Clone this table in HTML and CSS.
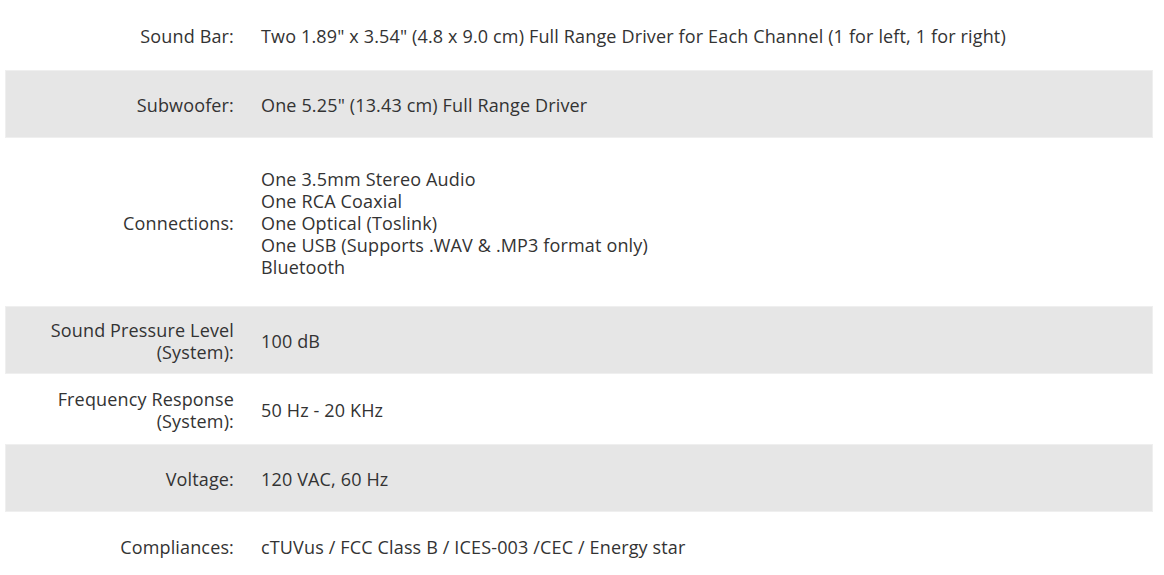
FILE: index.html
```html
<!DOCTYPE html>
<html>
<head>
<meta charset="utf-8">
<link rel="stylesheet" href="styles.css">
</head>
<body>
<table class="specs">
  <tr class="row h70">
    <th class="label">Sound Bar:</th>
    <td class="value">Two 1.89" x 3.54" (4.8 x 9.0 cm) Full Range Driver for Each Channel (1 for left, 1 for right)</td>
  </tr>
  <tr class="row alt">
    <th class="label">Subwoofer:</th>
    <td class="value">One 5.25" (13.43 cm) Full Range Driver</td>
  </tr>
  <tr class="row tall">
    <th class="label">Connections:</th>
    <td class="value">One 3.5mm Stereo Audio<br>One RCA Coaxial<br>One Optical (Toslink)<br>One USB (Supports .WAV &amp; .MP3 format only)<br>Bluetooth</td>
  </tr>
  <tr class="row alt">
    <th class="label">Sound Pressure Level (System):</th>
    <td class="value">100 dB</td>
  </tr>
  <tr class="row h70">
    <th class="label">Frequency Response (System):</th>
    <td class="value">50 Hz - 20 KHz</td>
  </tr>
  <tr class="row alt">
    <th class="label">Voltage:</th>
    <td class="value">120 VAC, 60 Hz</td>
  </tr>
  <tr class="row">
    <th class="label">Compliances:</th>
    <td class="value">cTUVus / FCC Class B / ICES-003 /CEC / Energy star</td>
  </tr>
</table>
</body>
</html>
```

FILE: styles.css
```css
html, body {
  margin: 0;
  padding: 0;
  background: #ffffff;
}
body {
  font-family: "Open Sans", "Liberation Sans", sans-serif;
  font-size: 18px;
  letter-spacing: 0.15px;
  line-height: 22px;
  color: #333333;
}
.specs {
  margin-left: 5px;
  width: 1148px;
  border-collapse: collapse;
  border-spacing: 0;
}
.row {
  height: 68px;
}
.row.h70 {
  height: 70px;
}
.row.tall {
  height: 168px;
}
.row.alt {
  background: #e6e6e6;
  outline: 1px solid #efefef;
  outline-offset: -1px;
}
.label {
  width: 196px;
  padding: 2px 13px 0 33px;
  text-align: right;
  font-weight: normal;
  vertical-align: middle;
}
.value {
  padding: 2px 0 0 14px;
  text-align: left;
  vertical-align: middle;
}
```
